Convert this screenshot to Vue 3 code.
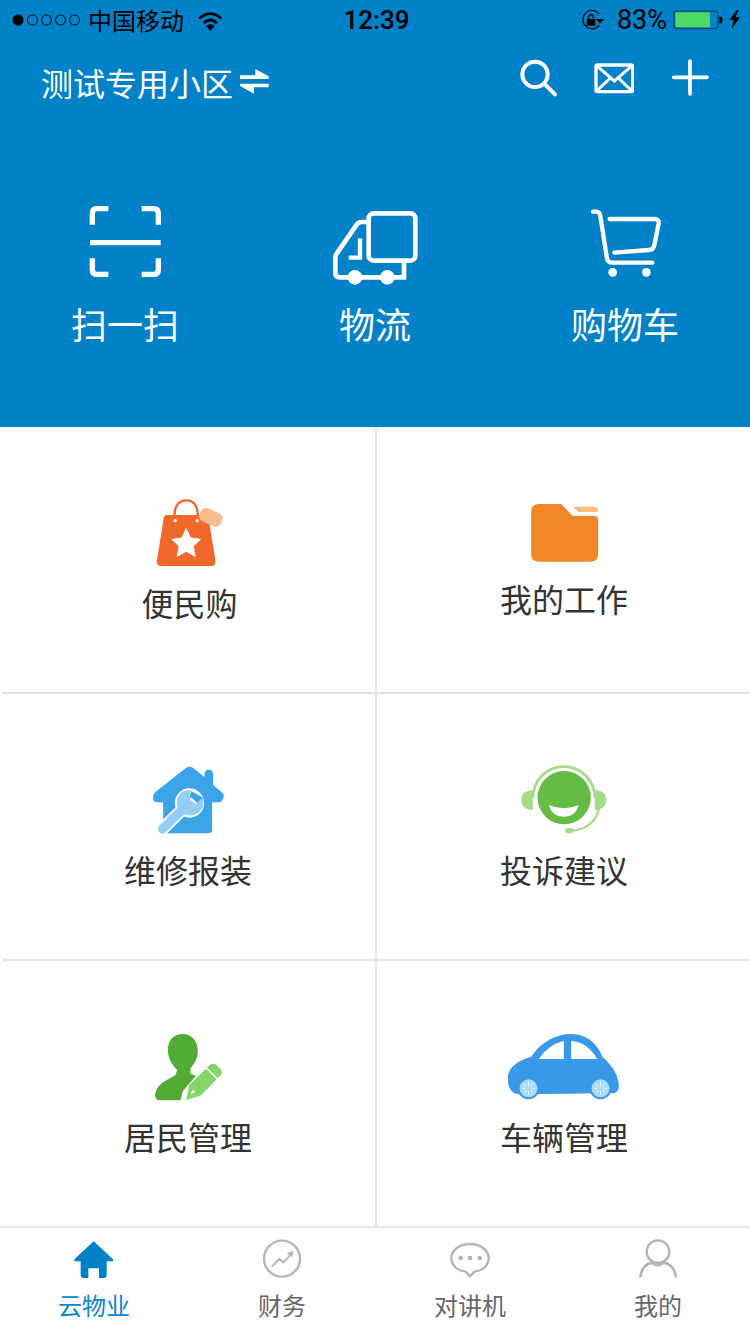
<script setup>
const quick = ['扫一扫', '物流', '购物车']
</script>

<template>
  <div class="page">
    <section class="hero">
      <div class="status">
        <div class="status-left">
          <svg class="dots" viewBox="0 0 69 14" width="69" height="14">
            <circle cx="6" cy="7" r="5.5" fill="#000" />
            <circle cx="20.5" cy="7" r="5" fill="none" stroke="#000" />
            <circle cx="34.5" cy="7" r="5" fill="none" stroke="#000" />
            <circle cx="48.5" cy="7" r="5" fill="none" stroke="#000" />
            <circle cx="62.5" cy="7" r="5" fill="none" stroke="#000" />
          </svg>
          <span class="carrier">中国移动</span>
          <svg class="wifi" viewBox="594 21 72 66" width="24" height="22">
            <path d="M598 50Q631 20 664 50M611 63Q631 45 651 63" fill="none" stroke="#000" stroke-width="8" />
            <path d="M618 72Q631 62 644 72L631 87Z" fill="#000" />
          </svg>
        </div>
        <span class="time">12:39</span>
        <div class="status-right">
          <svg viewBox="620 30 75 60" width="25" height="20">
            <path d="M678 42A27.500 27.500 0 1 0 678 76" fill="none" stroke="#000" stroke-width="3.500" />
            <path d="M668 57H693L680 71Z" fill="#000" />
            <rect x="640" y="57" width="26" height="20" rx="2" fill="#000" />
            <path d="M646 57V51A7 7 0 0 1 660 51V57" fill="none" stroke="#000" stroke-width="3.500" />
          </svg>
          <span class="percent">83%</span>
          <svg class="battery" viewBox="897 32 150 60" width="50" height="20">
            <rect x="900" y="35" width="132" height="53" rx="8" fill="none" stroke="#00324f" stroke-width="3" />
            <rect x="904" y="39" width="104" height="45" rx="2" fill="#4cd964" />
            <path d="M1036 52H1040Q1045 52 1045 57V67Q1045 72 1040 72H1036Z" fill="#000" />
          </svg>
          <svg class="bolt" viewBox="1058 32 39 60" width="13" height="20">
            <path d="M1084 33L1062 62H1075L1069 89L1094 54H1080L1090 33Z" fill="#000" />
          </svg>
        </div>
      </div>

      <div class="nav">
        <div class="title">
          <span>测试专用小区</span>
          <svg viewBox="717 202 96 90" width="32" height="30">
            <path d="M720 227H766V208L806 230V238H720ZM806 252V263H762V282L720 259V252Z" fill="#fff" />
          </svg>
        </div>
        <div class="nav-actions">
          <svg viewBox="429 171 120 120" width="40" height="40">
            <circle cx="480" cy="223" r="38" fill="none" stroke="#fff" stroke-width="12" />
            <path d="M510 253L540 283" fill="none" stroke="#fff" stroke-width="12" stroke-linecap="round" />
          </svg>
          <svg viewBox="657 171 120 120" width="40" height="40">
            <rect x="663" y="195" width="110" height="80" rx="5" fill="none" stroke="#fff" stroke-width="10" />
            <path d="M668 200L718 243L768 200M668 270L704 236M768 270L732 236" fill="none" stroke="#fff" stroke-width="9" />
          </svg>
          <svg viewBox="885 171 120 120" width="40" height="40">
            <path d="M945 183V282M896 232H996" fill="none" stroke="#fff" stroke-width="11" stroke-linecap="round" />
          </svg>
        </div>
      </div>

      <div class="quick">
        <div v-for="(label, i) in quick" :key="label" class="quick-item">
          <svg v-if="i === 0" viewBox="45 45 300 240" width="100" height="80">
            <path d="M97 104V70Q97 56 111 56H145M245 56H281Q295 56 295 70V104M97 205V239Q97 253 111 253H145M245 253H281Q295 253 295 239V205" fill="none" stroke="#fff" stroke-width="16" />
            <path d="M90 158H302" fill="none" stroke="#fff" stroke-width="16" />
          </svg>
          <svg v-else-if="i === 1" viewBox="795 45 300 240" width="100" height="80">
            <rect x="926" y="70" width="140" height="142" rx="15" fill="none" stroke="#fff" stroke-width="14" />
            <path d="M922 96H905Q895 96 890 104L832 188Q826 194 826 205V248Q826 262 840 262H1032V214" fill="none" stroke="#fff" stroke-width="14" />
            <path d="M900 145V203H866" fill="none" stroke="#fff" stroke-width="13" />
            <circle cx="885" cy="262" r="22" fill="#fff" />
            <circle cx="982" cy="262" r="22" fill="#fff" />
          </svg>
          <svg v-else viewBox="18 45 300 240" width="100" height="80">
            <path d="M72 65H82Q92 65 94 78L114 205Q116 218 130 218H250" fill="none" stroke="#fff" stroke-width="13" stroke-linecap="round" />
            <path d="M122 87H256Q271 87 269 100L256 165Q253 180 240 180L136 188" fill="none" stroke="#fff" stroke-width="13" stroke-linecap="round" />
            <circle cx="131" cy="247" r="13" fill="#fff" />
            <circle cx="232" cy="247" r="13" fill="#fff" />
          </svg>
          <span>{{ label }}</span>
        </div>
      </div>
    </section>

    <section class="grid">
      <div class="cell cell-first">
        <svg class="icon" viewBox="10.5 39 330 210" width="110" height="70">
          <path d="M135 92C135 60 150 46 170 46C190 46 205 60 205 92" fill="none" stroke="#f0682a" stroke-width="7" />
          <path d="M112 90H228Q236 90 237 98L258 228Q259 243 245 243H95Q81 243 82 228L103 98Q104 90 112 90Z" fill="#f0682a" />
          <circle cx="137" cy="107" r="5" fill="#fff" />
          <circle cx="203" cy="107" r="5" fill="#fff" />
          <path d="M170 131L183 159L213 163L191 184L197 214L170 199L143 214L149 184L127 163L157 159Z" fill="#fff" stroke="#fff" stroke-width="3" stroke-linejoin="round" />
          <rect x="209" y="76" width="70" height="42" rx="16" transform="rotate(24 244 97)" fill="#f8bd8e" />
        </svg>
        <span>便民购</span>
      </div>
      <div class="cell cell-short">
        <svg class="icon" viewBox="-1.500 24 330 198" width="110" height="66">
          <path d="M88 42H155L190 78H255Q266 78 266 90V193Q266 215 244 215H87Q65 215 65 193V65Q65 42 88 42Z" fill="#ef8627" />
          <path d="M190 50H254Q265 50 265 60V66H207Z" fill="#fbbd7c" />
        </svg>
        <span>我的工作</span>
      </div>
      <div class="cell">
        <svg class="icon" viewBox="-22.500 30 330 210" width="110" height="70">
          <path d="M136 39Q147 30 158 39L192 66V58Q192 44 205 44Q218 44 218 58V90L244 112Q251 118 249 128Q245 142 232 142H215V222Q215 235 202 235H82Q68 235 68 222V142H52Q38 142 38 128Q37 118 44 112Z" fill="#3ba3e8" />
          <path d="M66 222L129 160" fill="none" stroke="#fff" stroke-width="38" stroke-linecap="round" />
          <circle cx="147" cy="144" r="44" fill="#fff" />
          <path d="M66 222L129 160" fill="none" stroke="#94cef8" stroke-width="28" stroke-linecap="round" />
          <path d="M150 106C122 104 105 125 110 152C112 162 116 167 121 172C135 184 162 187 180 167C189 156 191 145 188 128L166 148L146 132Z" fill="#94cef8" />
          <path d="M146 132L152 108L188 128L166 148Z" fill="#3ba3e8" />
          <path d="M146 132L152 127L170 144L166 148Z" fill="#fff" />
        </svg>
        <span>维修报装</span>
      </div>
      <div class="cell">
        <svg class="icon" viewBox="-1.500 30 330 210" width="110" height="70">
          <path d="M70 128A93 93 0 0 1 256 128" fill="none" stroke="#a4dc8a" stroke-width="8" />
          <path d="M70 106C48 106 35 118 35 135C35 152 48 165 70 165Z" fill="#a4dc8a" />
          <path d="M256 106C278 106 290 118 290 135C290 152 278 165 256 165Z" fill="#a4dc8a" />
          <path d="M268 160C262 195 235 222 190 227" fill="none" stroke="#a4dc8a" stroke-width="7" />
          <rect x="167" y="219" width="24" height="16" rx="7" fill="#a4dc8a" />
          <circle cx="164" cy="128" r="80" fill="#66bd46" />
          <path d="M118 150Q163 170 208 150Q198 185 163 185Q128 185 118 150Z" fill="#fff" />
        </svg>
        <span>投诉建议</span>
      </div>
      <div class="cell cell-last">
        <svg class="icon" viewBox="-22.500 21 330 210" width="110" height="70">
          <path d="M127 27C155 27 172 50 172 78C172 105 158 120 150 130V146L166 153L127 198L120 226H58C42 226 40 208 50 190C60 172 90 160 105 150L110 135C95 120 82 100 82 75C82 45 100 27 127 27Z" fill="#52ab35" />
          <path d="M137 225L146 180L208 120Q218 112 228 120L241 133Q248 143 241 150L180 212Z" fill="#85d56b" />
          <path d="M197 128L232 163" fill="none" stroke="#fff" stroke-width="4" />
          <path d="M150 208L156 194L165 202Z" fill="#fff" />
        </svg>
        <span>居民管理</span>
      </div>
      <div class="cell cell-last">
        <svg class="icon icon-car" viewBox="-1.500 21 390 210" width="130" height="70">
          <path d="M25 155C28 122 62 105 95 95C125 50 170 27 215 27C265 27 295 60 310 97C335 118 358 150 358 182C358 198 350 205 335 205L60 208C35 208 25 190 25 155Z" fill="#3a98e8" />
          <path d="M118 102Q145 60 193 47V102ZM215 47Q265 52 293 102H215Z" fill="#fff" />
          <circle cx="87" cy="190" r="33" fill="#3a98e8" />
          <circle cx="87" cy="190" r="27" fill="#a8daf9" />
          <circle cx="303" cy="190" r="33" fill="#3a98e8" />
          <circle cx="303" cy="190" r="27" fill="#a8daf9" />
          <path d="M87 170V182M87 198V210M67 190H79M95 190H107M73 176L81 184M93 196L101 204M101 176L93 184M81 196L73 204M303 170V182M303 198V210M283 190H295M311 190H323M289 176L297 184M309 196L317 204M317 176L309 184M297 196L289 204" fill="none" stroke="#fff" stroke-width="2.500" />
        </svg>
        <span>车辆管理</span>
      </div>
    </section>

    <nav class="tabs">
      <div class="tab active">
        <svg viewBox="210 36 144 144" width="48" height="48">
          <path d="M281 52L339 106V112H320V152Q320 162 310 162H297V133H265V162H252Q242 162 242 152V112H223V106Z" fill="#0081c8" />
        </svg>
        <span>云物业</span>
      </div>
      <div class="tab">
        <svg viewBox="774 36 144 144" width="48" height="48">
          <circle cx="846" cy="104" r="54" fill="none" stroke="#b5b5b5" stroke-width="7" />
          <path d="M815 128L838 105L850 115L873 91" fill="none" stroke="#b5b5b5" stroke-width="6" />
          <path d="M860 88L880 80L878 100Z" fill="#b5b5b5" />
        </svg>
        <span>财务</span>
      </div>
      <div class="tab">
        <svg viewBox="213 36 144 144" width="48" height="48">
          <path d="M285 157L272 143C245 140 229 122 229 102C229 78 254 60 285 60C316 60 341 78 341 102C341 122 325 140 298 143Z" fill="none" stroke="#b5b5b5" stroke-width="7" stroke-linejoin="round" />
          <circle cx="257" cy="102" r="7" fill="#b5b5b5" />
          <circle cx="285" cy="102" r="7" fill="#b5b5b5" />
          <circle cx="314" cy="102" r="7" fill="#b5b5b5" />
        </svg>
        <span>对讲机</span>
      </div>
      <div class="tab">
        <svg viewBox="777 36 144 144" width="48" height="48">
          <circle cx="849" cy="83" r="34" fill="none" stroke="#b5b5b5" stroke-width="7" />
          <path d="M796 160C798 135 815 113 835 118Q849 130 863 118C883 113 900 135 903 160" fill="none" stroke="#b5b5b5" stroke-width="8" />
        </svg>
        <span>我的</span>
      </div>
    </nav>
  </div>
</template>

<style scoped>
.page {
  width: 750px;
  height: 1334px;
  overflow: hidden;
  background: #fff;
  font-family: "Noto Sans CJK SC", "Liberation Sans", sans-serif;
  color: #333;
}
svg {
  display: block;
  flex: none;
}

.hero {
  height: 427px;
  background: #0081c8;
  color: #fff;
}
.status {
  height: 40px;
  display: flex;
  align-items: center;
  color: #000;
}
.status-left,
.status-right {
  flex: 1;
  display: flex;
  align-items: center;
}
.status-left {
  padding-left: 12px;
}
.status-right {
  justify-content: flex-end;
  padding-right: 9px;
}
.carrier {
  margin-left: 7px;
  font-size: 24px;
  line-height: 40px;
}
.wifi {
  margin-left: 14px;
}
.time {
  font-family: Roboto, "Liberation Sans", sans-serif;
  font-weight: 500;
  font-size: 26px;
  line-height: 40px;
}
.percent {
  margin-left: 12px;
  font-family: Roboto, "Liberation Sans", sans-serif;
  font-size: 27px;
  line-height: 40px;
}
.battery {
  margin-left: 6px;
}
.bolt {
  margin-left: 5px;
}

.nav {
  height: 90px;
  display: flex;
  justify-content: space-between;
  padding: 17px 40px 0 41px;
  box-sizing: border-box;
}
.title {
  display: flex;
  align-items: center;
  gap: 6px;
  height: 40px;
  margin-top: 5px;
  font-size: 32px;
  line-height: 40px;
}
.nav-actions {
  display: flex;
  gap: 36px;
}

.quick {
  display: grid;
  grid-template-columns: repeat(3, 250px);
  padding-top: 75px;
}
.quick-item {
  display: flex;
  flex-direction: column;
  align-items: center;
  font-size: 36px;
  line-height: 50px;
  gap: 13px;
}

.grid {
  display: grid;
  grid-template-columns: 377px 373px;
  grid-auto-rows: 267px;
}
.cell {
  position: relative;
  display: flex;
  flex-direction: column;
  align-items: center;
  box-sizing: border-box;
  padding-top: 71px;
  font-size: 32px;
  line-height: 36px;
}
.cell span {
  margin-left: 1px;
}
.cell-first span {
  margin-left: 4px;
}
.cell:nth-child(odd) {
  border-right: 2px solid #e3e3e3;
}
.cell::after {
  content: "";
  position: absolute;
  left: 2px;
  right: 0;
  bottom: 0;
  height: 2px;
  background: #e3e3e3;
}
.cell:nth-child(even)::after {
  left: 0;
}
.cell-last::after {
  display: none;
}
.cell-last {
  height: 265px;
}
.icon {
  margin-bottom: 16px;
}

.tabs {
  display: grid;
  grid-template-columns: repeat(4, 188px);
  height: 108px;
  box-sizing: border-box;
  margin-top: -2px;
  padding-top: 8px;
  border-top: 2px solid #e6e6e6;
  background: #fff;
  overflow: hidden;
}
.tab {
  display: flex;
  flex-direction: column;
  align-items: center;
  gap: 5px;
  font-size: 24px;
  line-height: 32px;
  color: #666;
}
.tab.active {
  color: #0a86cd;
}
</style>
